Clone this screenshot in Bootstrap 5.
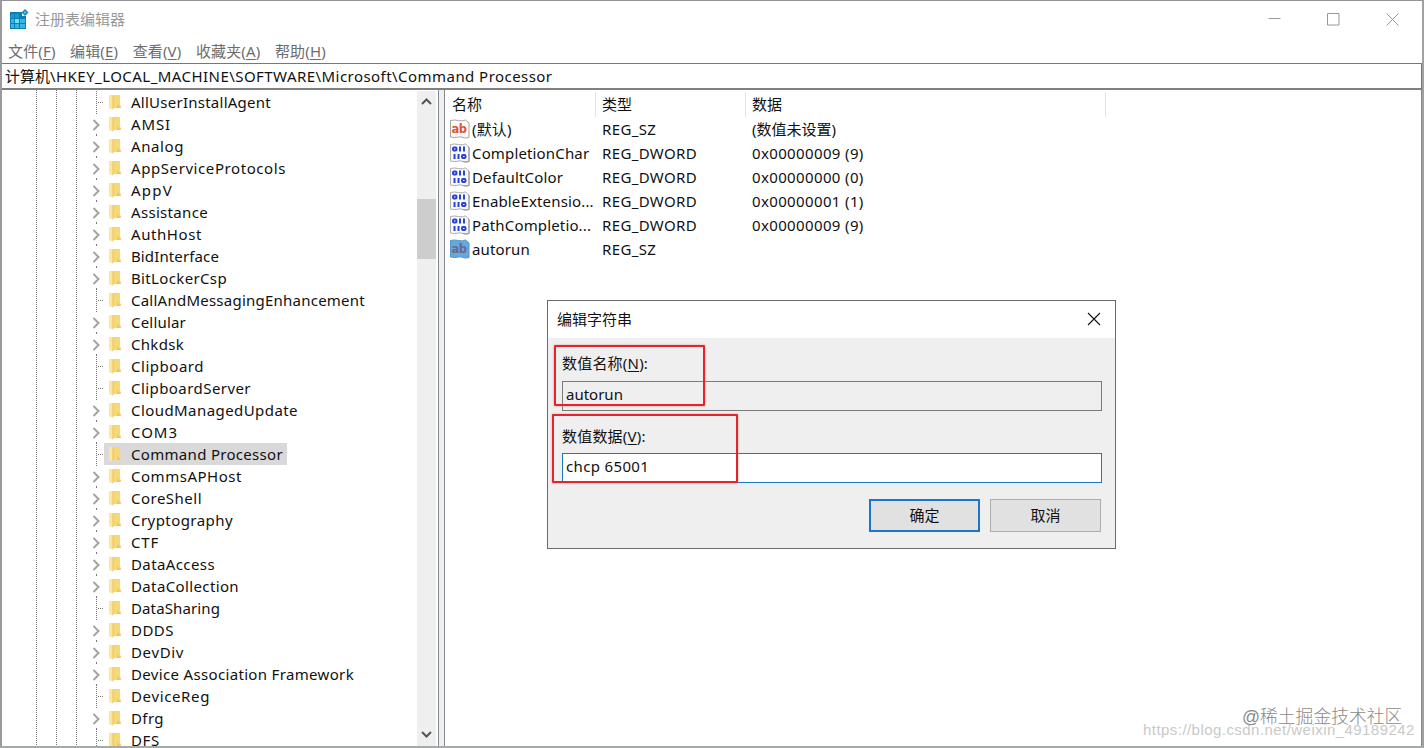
<!DOCTYPE html>
<html lang="zh-CN">
<head>
<meta charset="utf-8">
<meta name="viewport" content="width=device-width, initial-scale=1">
<title>注册表编辑器</title>
<link href="https://cdn.jsdelivr.net/npm/bootstrap@5.3.0/dist/css/bootstrap.min.css" rel="stylesheet">
<style>
body { font-family: "Noto Sans", "Noto Sans CJK SC", sans-serif; font-size: 15px; line-height: 22px; color: #111; width: 1424px; height: 748px; overflow: hidden; }
.win { width: 1424px; height: 748px; border: 1px solid #9c9a9c; border-left-width: 2px; border-bottom: 2px solid #a5a9a7; border-right: 2px solid #a0a2a0; border-top-color: #97919a; }
.titlebar { height: 36px; color: #999; padding-left: 7px; }
.titlebar .caps { gap: 46px; margin-right: 23px; }
.menubar { height: 26px; color: #6d6d6d; padding: 1px 0 0 6px; gap: 14.500px; letter-spacing: .15px; }
.menubar span { white-space: nowrap; }
.address { height: 27px; border-top: 1px solid #777; border-bottom: 2px solid #808080; border-right: 1px solid #777; padding-left: 3px; flex: none; }
.address span { letter-spacing: .45px; }
.tree { width: 437px; border-right: 1px solid #828790; padding-top: 1px; }
.guides { width: 75px; margin-top: -1px; }
.guides i { width: 1px; flex: none; margin-right: 19px; background: repeating-linear-gradient(#777 0 1px, transparent 1px 2px); }
.guides i:first-child { margin-left: 34px; }
.guides i:last-child { margin-right: 0; }
.node { height: 22px; white-space: nowrap; }
.branch { width: 27px; flex: none; }
.node .cap { height: 22px; padding: 0 4px 0 5px; }
.node .cap svg { margin-right: 10px; }
.node.sel .cap { background: #d9d9d9; }
.scroller { width: 19px; margin-right: 2px; background: #efefef; }
.thumb { height: 60px; margin-top: 90px; background: #cdcdcd; }
.splitter { width: 5px; background: #f0f0f0; }
.values { border-left: 1px solid #828790; border-right: 1px solid #828790; }
.vhead { height: 27px; }
.vhead div { height: 25px; margin-top: 2px; border-right: 1px solid #e3e3e3; line-height: 24px; padding-left: 6px; }
.vhead .c1 { padding-left: 7px; }
.c1 { width: 151px; } .c2 { width: 150px; } .c3 { width: 360px; }
.vrow { height: 24px; line-height: 24px; }
.vrow .c1 { padding-left: 5px; letter-spacing: .15px; }
.vrow .c2, .vrow .c3 { padding-left: 6px; letter-spacing: .36px; }
.vrow:first-child .c3 { letter-spacing: 0; }
.dlg { left: 547px; top: 300px; width: 569px; height: 249px; background: #efefef; border: 1px solid #6b6b6b; }
.dlg-title { height: 37px; background: #fff; padding: 0 14px 2px 9px; }
.dlg-body { padding: 13px 14px 0 14px; }
.dlg-body label { height: 24px; line-height: 24px; letter-spacing: .2px; }
.field { display: block; width: 540px; height: 30px; border-radius: 0; border: 1px solid #7a7a7a; background: #efefef; padding: 0 3px 4px; font: inherit; color: #111; }
.field.active { background: #fff; border-color: #1979c2; letter-spacing: .35px; }
.pushbtn { width: 111px; height: 33px; border-radius: 0; background: #e1e1e1; border: 1px solid #adadad; font-size: 15px; padding: 0; color: #111; }
.pushbtn.main { border: 2px solid #1976c8; }
.marker { border: 2px solid #e3242b; border-radius: 1px; box-shadow: 0 0 2px #f08080; }
.m1 { left: 6px; top: 44px; width: 151px; height: 61px; }
.m2 { left: 4px; top: 113px; width: 186px; height: 69px; }
.wm1 { left: 1242px; top: 706px; font-size: 17.800px; color: #8a8a8a; font-family: "Liberation Sans", "Noto Sans CJK SC", sans-serif; font-weight: 300; white-space: nowrap; }
.wm2 { left: 1143px; top: 719px; font-size: 15px; color: #c9c9c9; font-family: "Liberation Sans", sans-serif; letter-spacing: .45px; white-space: nowrap; }
u { text-underline-offset: 2px; }
</style>
</head>
<body class="bg-white position-relative">

<svg width="0" height="0" class="position-absolute" aria-hidden="true">
  <symbol id="folder" viewBox="0 0 12 16">
    <path d="M0 1h11v10l1 1v2H3z" fill="#f8d775"/>
    <path d="M0 1h2l2 1v14L0 14z" fill="#fbe6a2"/>
    <path d="M4 2v13" stroke="#e9c35c"/>
    <path d="M8 10l4 4H8z" fill="#edc65f"/>
  </symbol>
  <symbol id="dw" viewBox="0 0 20 20">
    <path d="M.5 1.500q4-1 8 0t7-.5l3.500 3v14.500q-4 1-6 0t-4.500-.5-4 .5-4-.5z" fill="#fafafa" stroke="#adadad"/>
    <path d="M19 4v14.500q-4 1-6 0" fill="none" stroke="#929292"/>
    <g fill="none" stroke="#2743d8" stroke-width="2">
      <rect x="3" y="4.500" width="3.500" height="3" rx="1"/><path d="M10 3.500v5M14 3.500v5"/>
      <path d="M4.500 11v5M8.500 11v5"/><rect x="12" y="12" width="3.500" height="3" rx="1"/>
    </g>
  </symbol>
</svg>

<main class="win d-flex flex-column">
  <header class="titlebar d-flex align-items-center flex-shrink-0">
    <svg width="20" height="21" viewBox="0 0 20 21" style="margin-right:6px">
      <path d="M1 3h12v4h4v13H1z" fill="#087fb5"/>
      <path d="M2 5h3v4H2zM6 5h4v4H6zM2 10h3v4H2zM6 10h4v4H6zM11 10h5v4h-5zM2 15h3v4H2zM6 15h4v4H6zM11 15h5v4h-5z" fill="#36b7e3"/>
      <path d="M2 5h3v4H2zM6 5h4v4H6z" fill="#139ccb"/>
      <path d="M6 10h4v4H6z" fill="#7bdcf4"/>
      <path d="M16 0l3.500 3.500L16 7l-3.500-3.500z" fill="#1b86b5"/><path d="M16 2l1.500 1.500L16 5l-1.500-1.500z" fill="#5fc4e6"/>
    </svg>
    <span class="me-auto">注册表编辑器</span>
    <div class="caps d-flex align-items-center">
      <svg width="13" height="13"><path d="M.5 5.500h12" stroke="#999"/></svg>
      <svg width="13" height="13"><path d="M.5.5h11.500v11.500H.5z" fill="none" stroke="#999"/></svg>
      <svg width="13" height="13"><path d="M.5.5l12 12M12.500.5l-12 12" stroke="#999"/></svg>
    </div>
  </header>

  <nav class="menubar d-flex align-items-center flex-shrink-0">
    <span>文件(<u>F</u>)</span><span>编辑(<u>E</u>)</span><span>查看(<u>V</u>)</span><span>收藏夹(<u>A</u>)</span><span>帮助(<u>H</u>)</span>
  </nav>

  <div class="address d-flex align-items-center">计算机<span>\HKEY_LOCAL_MACHINE\SOFTWARE\Microsoft\Command Processor</span></div>

  <div class="d-flex flex-grow-1 overflow-hidden">
    <section class="tree d-flex overflow-hidden flex-shrink-0">
      <div class="guides d-flex flex-shrink-0"><i></i><i></i><i></i></div>
      <div id="nodes" class="flex-grow-1 overflow-hidden"></div>
      <div class="scroller d-flex flex-column align-items-center flex-shrink-0">
        <svg class="flex-shrink-0" style="margin-top:3px" width="11" height="15"><path d="M1 10l4.500-4.500L10 10" fill="none" stroke="#555" stroke-width="2"/></svg>
        <div class="thumb w-100 flex-shrink-0"></div>
        <svg class="mt-auto mb-1 flex-shrink-0" width="11" height="14"><path d="M1 4l4.500 4.500L10 4" fill="none" stroke="#555" stroke-width="2"/></svg>
      </div>
    </section>
    <div class="splitter flex-shrink-0"></div>
    <section class="values flex-grow-1">
      <div class="vhead d-flex"><div class="c1">名称</div><div class="c2">类型</div><div class="c3">数据</div></div>
      <div id="rows"></div>
    </section>
  </div>
</main>

<section class="dlg position-absolute">
  <div class="dlg-title d-flex align-items-center justify-content-between">
    <span>编辑字符串</span>
    <svg width="14" height="14"><path d="M1 1l12 12M13 1L1 13" stroke="#111" stroke-width="1.100"/></svg>
  </div>
  <div class="dlg-body">
    <label for="vn" class="d-block">数值名称(<u>N</u>):</label>
    <input id="vn" class="field" style="margin-top:6px" value="autorun" readonly>
    <label for="vd" class="d-block" style="margin-top:13px">数值数据(<u>V</u>):</label>
    <input id="vd" class="field active" style="margin-top:5px" value="chcp 65001">
    <div class="d-flex justify-content-end mt-3" style="gap:10px">
      <button class="btn pushbtn main">确定</button>
      <button class="btn pushbtn">取消</button>
    </div>
  </div>
  <div class="marker m1 position-absolute"></div>
  <div class="marker m2 position-absolute"></div>
</section>

<div class="wm2 position-absolute">https://blog.csdn.net/weixin_49189242</div>
<div class="wm1 position-absolute">@稀土掘金技术社区</div>

<script src="https://cdn.jsdelivr.net/npm/bootstrap@5.3.0/dist/js/bootstrap.bundle.min.js"></script>
<script>
// [label, caption width]; "-" marks a key without subkeys, "*" the selected one
const keys = [["-AllUserInstallAgent",139],["AMSI",39],["Analog",52],["AppServiceProtocols",154],["AppV",41],["Assistance",76],["AuthHost",70],["BidInterface",87],["BitLockerCsp",95],["-CallAndMessagingEnhancement",233],["Cellular",54],["Chkdsk",52],["-Clipboard",72],["-ClipboardServer",119],["CloudManagedUpdate",166],["COM3",46],["-*Command Processor",151],["CommsAPHost",110],["CoreShell",70],["Cryptography",101],["CTF",27],["DataAccess",83],["DataCollection",107],["-DataSharing",88],["DDDS",42],["DevDiv",52],["Device Association Framework",222],["-DeviceReg",78],["Dfrg",32],["-DFS",28]];
const leaf = '<path d="M19.500 0v22M21 11.500h7" stroke="#777" stroke-dasharray="1 1"/>';
const open = '<path d="M19.500 0v1M19.500 21v1" stroke="#777"/><path d="M16.500 7l5 5-5 5" fill="none" stroke="#a3a3a3" stroke-width="2"/>';
document.getElementById("nodes").innerHTML = keys.map(([k, w]) => `<div class="node d-flex${k.includes("*") ? " sel" : ""}"><svg class="branch" height="22">${k[0] === "-" ? leaf : open}</svg><div class="cap d-flex align-items-center"><svg width="12" height="16"><use href="#folder"/></svg><span data-w="${w}">${k.replace(/[-*]/g, "")}</span></div></div>`).join("");
// spread each caption over its width
document.querySelectorAll("[data-w]").forEach(s => {
  s.style.letterSpacing = ((+s.dataset.w + 1 - s.getBoundingClientRect().width) / s.textContent.length).toFixed(3) + "px";
});
const ab = (paper, edge, ink) => `<path d="M.5 1.500q4-1 8 0t7-.5l3.500 3v14.500q-4 1-6 0t-4.500-.5-4 .5-4-.5z" fill="${paper}" stroke="${edge}"/><text x="1.500" y="13.500" font-family="DejaVu Sans" font-size="11.500" font-weight="bold" letter-spacing="-.4" fill="${ink}">ab</text>`;
const icons = { sz: ab("#fafafa", "#a5a5a5", "#dd5436"), szsel: ab("#62a9de", "#5795c4", "#70668b"), dw: '<use href="#dw"/>' };
const vals = [["sz","(默认)","REG_SZ","(数值未设置)"],["dw","CompletionChar","REG_DWORD","0x00000009 (9)"],["dw","DefaultColor","REG_DWORD","0x00000000 (0)"],["dw","EnableExtensio...","REG_DWORD","0x00000001 (1)"],["dw","PathCompletio...","REG_DWORD","0x00000009 (9)"],["szsel","autorun","REG_SZ",""]];
document.getElementById("rows").innerHTML = vals.map(v => `<div class="vrow d-flex"><div class="c1 d-flex text-nowrap"><svg class="flex-shrink-0" width="20" height="20" style="margin:2px 2px 0 0">${icons[v[0]]}</svg><span>${v[1]}</span></div><div class="c2">${v[2]}</div><div class="c3">${v[3]}</div></div>`).join("");
</script>
</body>
</html>
